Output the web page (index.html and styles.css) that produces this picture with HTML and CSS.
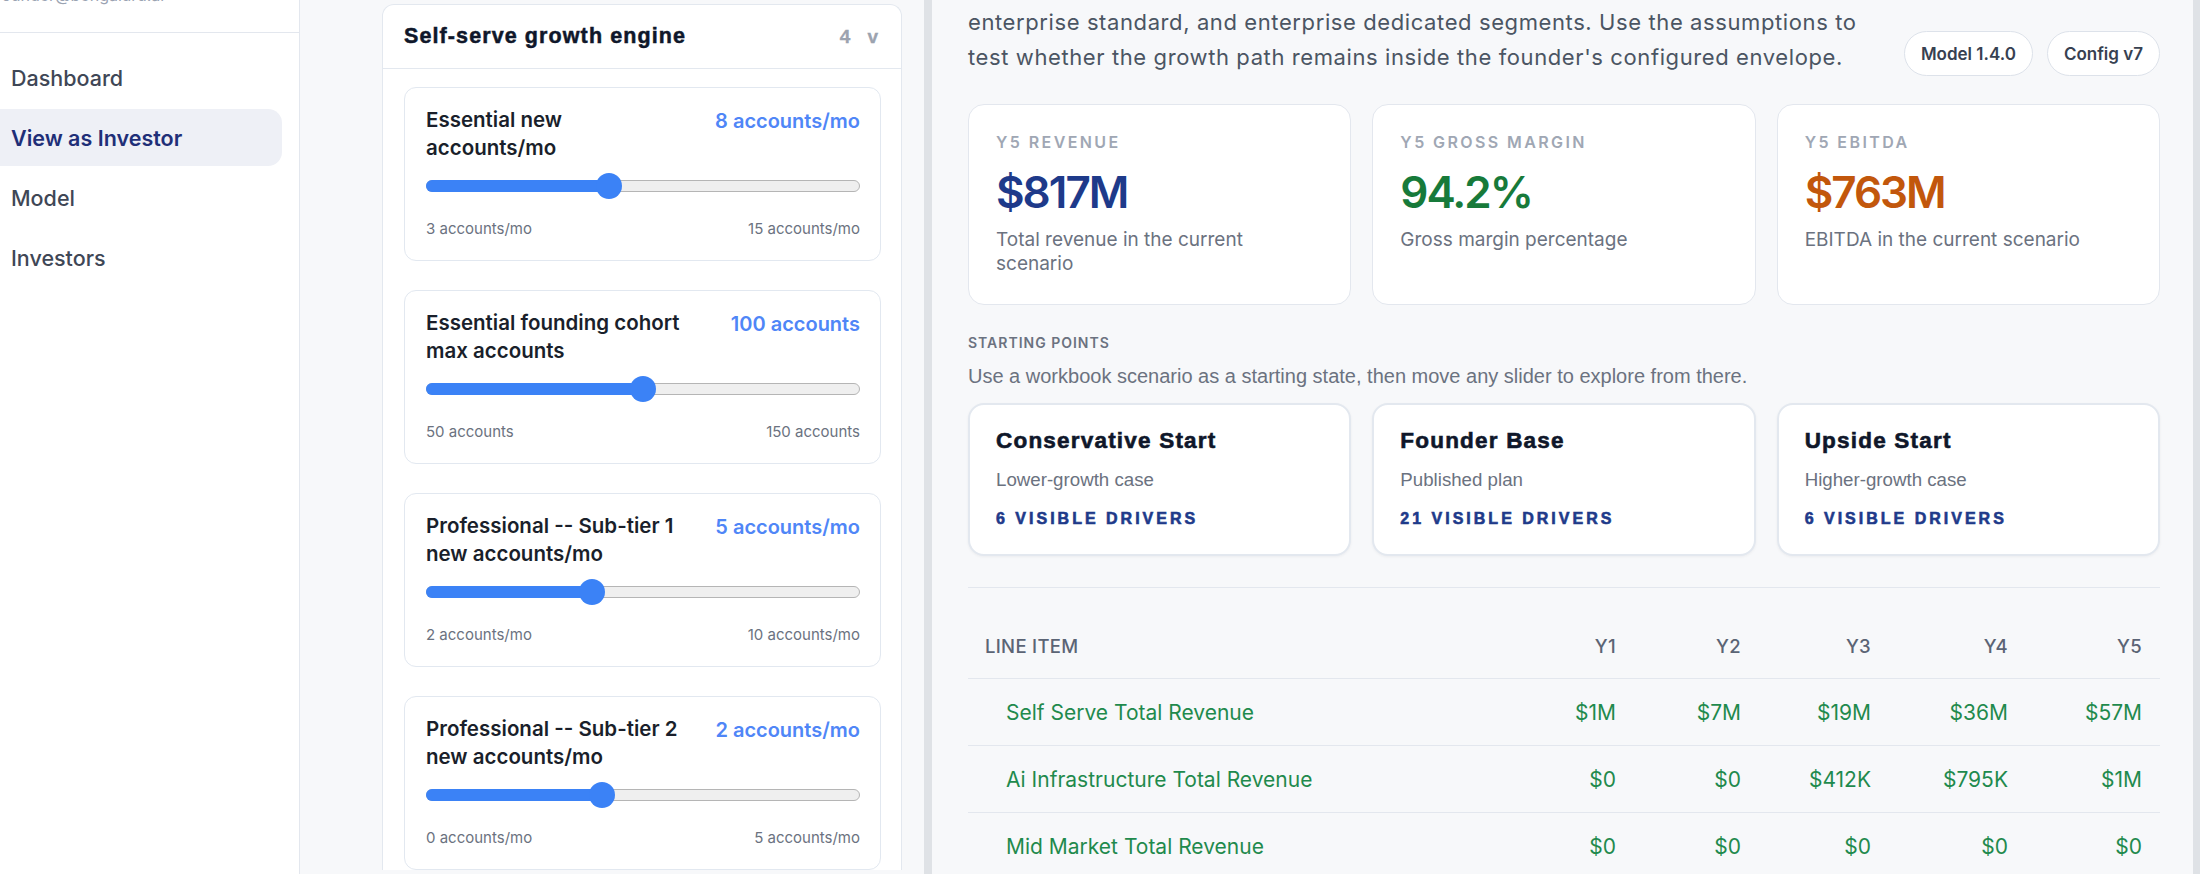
FILE: index.html
```html
<!DOCTYPE html>
<html lang="en">
<head>
<meta charset="utf-8">
<title>View as Investor</title>
<link rel="stylesheet" href="styles.css">
</head>
<body>
<div class="app">
  <aside class="sidebar">
    <div class="side-head"><span class="email">founder@bengaluru.ai</span></div>
    <nav class="nav">
      <a class="nav-item">Dashboard</a>
      <a class="nav-item active">View as Investor</a>
      <a class="nav-item">Model</a>
      <a class="nav-item">Investors</a>
    </nav>
  </aside>

  <section class="drivers">
    <div class="group">
      <div class="group-head">
        <h2 class="group-title">Self-serve growth engine</h2>
        <div class="group-meta"><span>4</span><span>v</span></div>
      </div>
      <div class="group-body">
        <div class="driver">
          <div class="driver-head">
            <div class="driver-label">Essential new<br>accounts/mo</div>
            <div class="driver-value">8 accounts/mo</div>
          </div>
          <div class="slider" style="--p:0.4167"><div class="fill"></div><div class="thumb"></div></div>
          <div class="range"><span>3 accounts/mo</span><span>15 accounts/mo</span></div>
        </div>
        <div class="driver">
          <div class="driver-head">
            <div class="driver-label">Essential founding cohort<br>max accounts</div>
            <div class="driver-value">100 accounts</div>
          </div>
          <div class="slider" style="--p:0.5"><div class="fill"></div><div class="thumb"></div></div>
          <div class="range"><span>50 accounts</span><span>150 accounts</span></div>
        </div>
        <div class="driver">
          <div class="driver-head">
            <div class="driver-label">Professional -- Sub-tier 1<br>new accounts/mo</div>
            <div class="driver-value">5 accounts/mo</div>
          </div>
          <div class="slider" style="--p:0.375"><div class="fill"></div><div class="thumb"></div></div>
          <div class="range"><span>2 accounts/mo</span><span>10 accounts/mo</span></div>
        </div>
        <div class="driver">
          <div class="driver-head">
            <div class="driver-label">Professional -- Sub-tier 2<br>new accounts/mo</div>
            <div class="driver-value">2 accounts/mo</div>
          </div>
          <div class="slider" style="--p:0.4"><div class="fill"></div><div class="thumb"></div></div>
          <div class="range"><span>0 accounts/mo</span><span>5 accounts/mo</span></div>
        </div>
      </div>
    </div>
  </section>

  <main class="main">
    <div class="intro">
      <p class="intro-text">enterprise standard, and enterprise dedicated segments. Use the assumptions to<br>test whether the growth path remains inside the founder's configured envelope.</p>
      <div class="badges">
        <span class="badge">Model 1.4.0</span>
        <span class="badge">Config v7</span>
      </div>
    </div>

    <div class="kpis">
      <div class="kpi">
        <div class="kpi-label">Y5 REVENUE</div>
        <div class="kpi-value navy">$817M</div>
        <div class="kpi-desc">Total revenue in the current<br>scenario</div>
      </div>
      <div class="kpi">
        <div class="kpi-label">Y5 GROSS MARGIN</div>
        <div class="kpi-value green">94.2%</div>
        <div class="kpi-desc">Gross margin percentage</div>
      </div>
      <div class="kpi">
        <div class="kpi-label">Y5 EBITDA</div>
        <div class="kpi-value orange">$763M</div>
        <div class="kpi-desc">EBITDA in the current scenario</div>
      </div>
    </div>

    <div class="section-label">STARTING POINTS</div>
    <div class="section-sub">Use a workbook scenario as a starting state, then move any slider to explore from there.</div>
    <div class="starts">
      <div class="start">
        <div class="start-title">Conservative Start</div>
        <div class="start-sub">Lower-growth case</div>
        <div class="start-count">6 VISIBLE DRIVERS</div>
      </div>
      <div class="start">
        <div class="start-title">Founder Base</div>
        <div class="start-sub">Published plan</div>
        <div class="start-count">21 VISIBLE DRIVERS</div>
      </div>
      <div class="start">
        <div class="start-title">Upside Start</div>
        <div class="start-sub">Higher-growth case</div>
        <div class="start-count">6 VISIBLE DRIVERS</div>
      </div>
    </div>

    <div class="divider"></div>

    <div class="table">
      <div class="row head">
        <div class="cell label">LINE ITEM</div>
        <div class="cell num">Y1</div>
        <div class="cell num">Y2</div>
        <div class="cell num">Y3</div>
        <div class="cell num">Y4</div>
        <div class="cell num">Y5</div>
      </div>
      <div class="row">
        <div class="cell label item">Self Serve Total Revenue</div>
        <div class="cell num">$1M</div>
        <div class="cell num">$7M</div>
        <div class="cell num">$19M</div>
        <div class="cell num">$36M</div>
        <div class="cell num">$57M</div>
      </div>
      <div class="row">
        <div class="cell label item">Ai Infrastructure Total Revenue</div>
        <div class="cell num">$0</div>
        <div class="cell num">$0</div>
        <div class="cell num">$412K</div>
        <div class="cell num">$795K</div>
        <div class="cell num">$1M</div>
      </div>
      <div class="row">
        <div class="cell label item">Mid Market Total Revenue</div>
        <div class="cell num">$0</div>
        <div class="cell num">$0</div>
        <div class="cell num">$0</div>
        <div class="cell num">$0</div>
        <div class="cell num">$0</div>
      </div>
    </div>
  </main>
</div>
</body>
</html>
```

FILE: styles.css
```css
* { box-sizing: border-box; }
html, body { margin: 0; height: 100%; overflow: hidden; }
body {
  font-family: Inter, "Noto Sans", sans-serif;
  background: #f7f8fa;
  color: #1f2937;
}
.app { display: flex; height: 874px; }

/* Sidebar */
.sidebar {
  width: 300px;
  flex: none;
  background: #ffffff;
  border-right: 1px solid #e3e7ee;
}
.side-head {
  height: 33px;
  border-bottom: 1px solid #e3e7ee;
  overflow: hidden;
}
.email {
  display: block;
  margin-top: -15px;
  margin-left: -4px;
  font-size: 16px;
  line-height: 20px;
  color: #9aa3b2;
}
.nav {
  display: flex;
  flex-direction: column;
  gap: 3px;
  padding-top: 16px;
}
.nav-item {
  height: 57px;
  display: flex;
  align-items: center;
  padding-left: 11px;
  margin-right: 17px;
  font-size: 21.5px;
  font-weight: 500;
  color: #3f4756;
  border-radius: 0 14px 14px 0;
}
.nav-item.active {
  background: #eef0f6;
  color: #1f2f78;
  font-weight: 600;
}

/* Drivers column */
.drivers {
  width: 632px;
  flex: none;
  padding: 4px 22px 0 82px;
  border-right: 8px solid #dfe2e6;
  background: #f7f8fa;
  overflow: hidden;
}
.group {
  background: #ffffff;
  border: 1px solid #e3e8ef;
  border-bottom: none;
  border-radius: 12px 12px 0 0;
}
.group-head {
  height: 64px;
  display: flex;
  align-items: center;
  justify-content: space-between;
  padding: 0 23px 0 21px;
  border-bottom: 1px solid #e3e8ef;
}
.group-title {
  margin: 0;
  font-family: "Liberation Sans", Arial, sans-serif;
  font-size: 21.5px;
  font-weight: 700;
  letter-spacing: 1.1px;
  color: #0f172a;
  -webkit-text-stroke: 0.5px #0f172a;
}
.group-meta {
  display: flex;
  gap: 17px;
  font-family: "Liberation Sans", Arial, sans-serif;
  font-size: 19px;
  font-weight: 700;
  color: #9ca3af;
  -webkit-text-stroke: 0.3px #9ca3af;
}
.group-body {
  display: flex;
  flex-direction: column;
  gap: 29px;
  padding: 18px 20px 0 21px;
}
.driver {
  border: 1px solid #e2e8f0;
  border-radius: 12px;
  padding: 18px 20px 21px 21px;
  background: #ffffff;
}
.driver-head {
  display: flex;
  justify-content: space-between;
  align-items: flex-start;
  gap: 16px;
}
.driver-label {
  font-size: 20.5px;
  font-weight: 600;
  line-height: 28px;
  color: #1a1f2b;
  white-space: nowrap;
}
.driver-value {
  font-size: 20px;
  font-weight: 600;
  line-height: 30px;
  color: #4f86f7;
  white-space: nowrap;
}
.slider {
  position: relative;
  height: 12px;
  margin-top: 18px;
  margin-bottom: 7px;
  border-radius: 6px;
  background: #efefef;
  border: 1px solid #b5b5b5;
}
.fill {
  position: absolute;
  left: -1px;
  top: -1px;
  bottom: -1px;
  width: calc(13px + var(--p) * (100% - 24px));
  background: #3b82f6;
  border-radius: 6px;
}
.thumb {
  position: absolute;
  top: -8px;
  left: calc(var(--p) * (100% - 24px) - 1px);
  width: 26px;
  height: 26px;
  border-radius: 50%;
  background: #3b82f6;
}
.range {
  display: flex;
  justify-content: space-between;
  margin-top: 27px;
  font-size: 15px;
  line-height: 20px;
  color: #6b7280;
}

/* Main */
.main {
  flex: 1;
  min-width: 0;
  padding: 0 33px 0 36px;
  border-right: 7px solid #dfe2e6;
  background: #f7f8fa;
  overflow: hidden;
}
.intro {
  display: flex;
  align-items: flex-end;
  justify-content: space-between;
  padding-top: 5px;
}
.intro-text {
  margin: 0;
  font-size: 22px;
  letter-spacing: 0.6px;
  line-height: 35px;
  color: #4b5563;
  white-space: nowrap;
}
.badges {
  display: flex;
  gap: 14px;
  margin-bottom: -1px;
}
.badge {
  height: 45px;
  display: flex;
  align-items: center;
  padding: 0 16px;
  border: 1px solid #dde2ea;
  border-radius: 23px;
  background: #ffffff;
  font-size: 17px;
  font-weight: 600;
  color: #374151;
}

.kpis {
  display: grid;
  grid-template-columns: repeat(3, 1fr);
  gap: 21px;
  margin-top: 29px;
}
.kpi {
  height: 201px;
  background: #ffffff;
  border: 1px solid #e3e7ee;
  border-radius: 16px;
  padding: 27px 27px;
}
.kpi-label {
  font-size: 16px;
  font-weight: 600;
  letter-spacing: 2.4px;
  line-height: 20px;
  color: #a0a7b4;
}
.kpi-value {
  margin-top: 12px;
  font-size: 44px;
  font-weight: 600;
  letter-spacing: -2px;
  line-height: 56px;
}
.navy { color: #1e3a8a; }
.green { color: #177a3a; }
.orange { color: #c2570c; }
.kpi-desc {
  margin-top: 8px;
  font-size: 19px;
  line-height: 24px;
  color: #6b7280;
}

.section-label {
  margin-top: 28px;
  font-size: 14px;
  font-weight: 600;
  letter-spacing: 1px;
  line-height: 20px;
  color: #6b7280;
}
.section-sub {
  margin-top: 11px;
  font-family: "Liberation Sans", Arial, sans-serif;
  font-size: 20px;
  line-height: 24px;
  color: #6b7280;
}
.starts {
  display: grid;
  grid-template-columns: repeat(3, 1fr);
  gap: 21px;
  margin-top: 15px;
}
.start {
  height: 153px;
  background: #ffffff;
  border: 2px solid #e3e8ef;
  border-radius: 16px;
  padding: 22px 26px;
  box-shadow: 0 1px 3px rgba(15, 23, 42, 0.05);
  font-family: "Liberation Sans", Arial, sans-serif;
}
.start-title {
  font-size: 22.5px;
  font-weight: 700;
  letter-spacing: 1.2px;
  line-height: 28px;
  color: #0f172a;
  -webkit-text-stroke: 0.6px #0f172a;
}
.start-sub {
  margin-top: 13px;
  font-size: 18.7px;
  line-height: 24px;
  color: #6b7280;
}
.start-count {
  margin-top: 16px;
  font-size: 16px;
  font-weight: 700;
  letter-spacing: 3px;
  line-height: 22px;
  color: #1e3a8a;
  -webkit-text-stroke: 0.6px #1e3a8a;
}

.divider {
  margin-top: 31px;
  border-top: 1px solid #e3e7ee;
}

.table { margin-top: 25px; }
.row {
  display: grid;
  grid-template-columns: 1fr 125px 125px 130px 137px 134px;
  height: 67px;
  align-items: center;
  border-bottom: 1px solid #e3e7ee;
}
.row.head { height: 66px; }
.cell { font-size: 21px; color: #1f8a4d; }
.cell.num { text-align: right; padding-right: 18px; }
.cell.label { padding-left: 17px; }
.cell.item { padding-left: 38px; }
.row.head .cell {
  font-size: 18.5px;
  font-weight: 500;
  letter-spacing: 0.3px;
  color: #5b6475;
}
```
